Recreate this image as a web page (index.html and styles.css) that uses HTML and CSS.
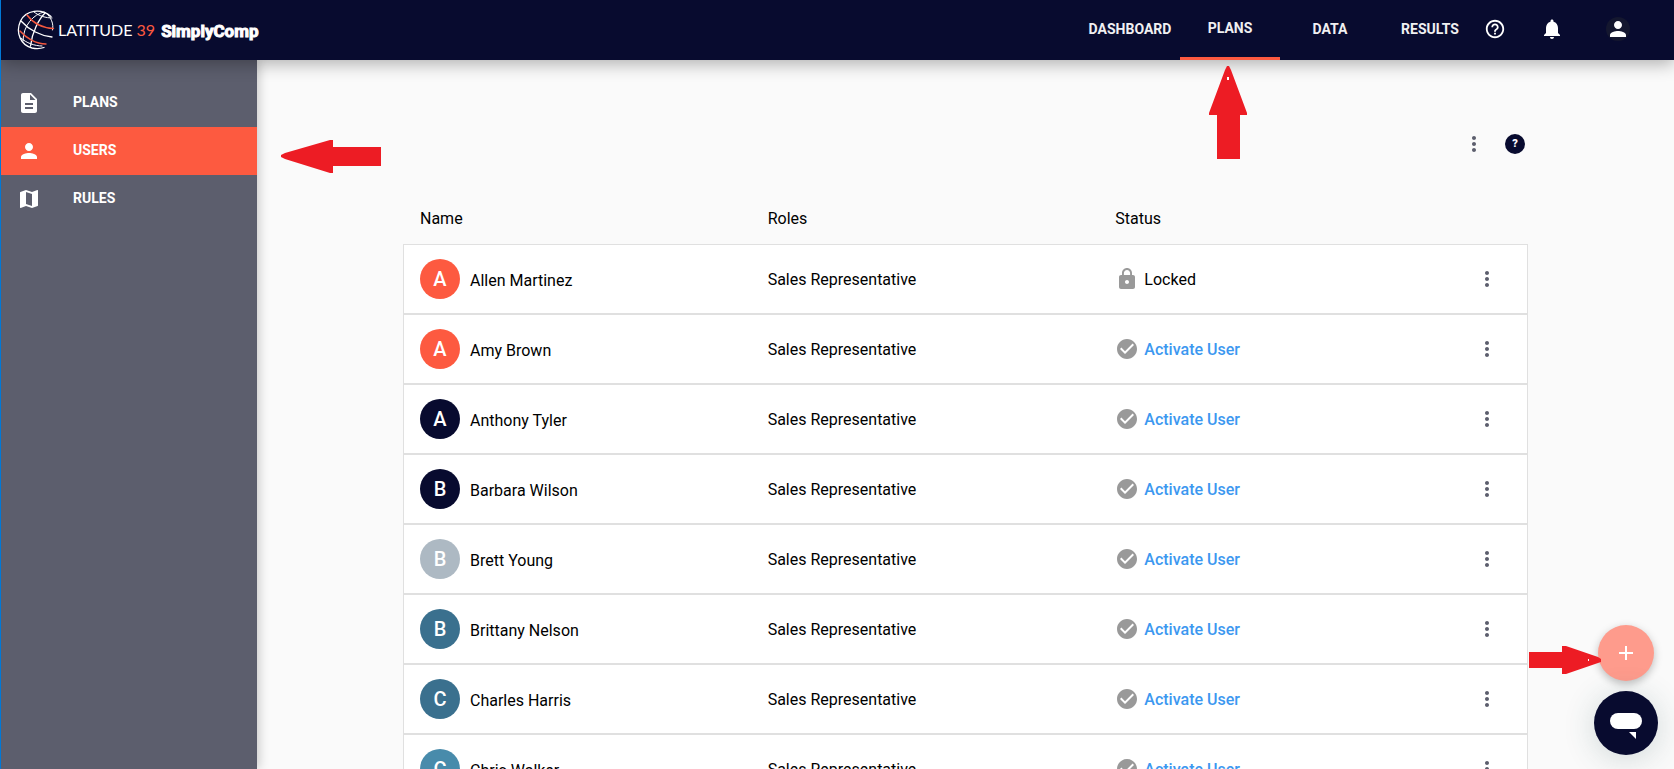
FILE: index.html
```html
<!DOCTYPE html>
<html lang="en">
<head>
    <meta charset="UTF-8">
    <meta name="viewport" content="width=device-width, initial-scale=1.0">
    <title>Latitude 39 SimplyComp - Users</title>
    <link rel="stylesheet" href="styles.css">
</head>
<body>
    <!-- Shared icons -->
    <svg class="sprite" aria-hidden="true">
        <symbol id="icon-more" viewBox="0 0 24 24"><path d="M12 8c1.1 0 2-.9 2-2s-.9-2-2-2-2 .9-2 2 .9 2 2 2zm0 2c-1.1 0-2 .9-2 2s.9 2 2 2 2-.9 2-2-.9-2-2-2zm0 6c-1.1 0-2 .9-2 2s.9 2 2 2 2-.9 2-2-.9-2-2-2z"/></symbol>
        <symbol id="icon-check" viewBox="0 0 24 24"><path d="M12 2C6.480 2 2 6.480 2 12s4.480 10 10 10 10-4.480 10-10S17.520 2 12 2zm-2 15l-5-5 1.410-1.410L10 14.170l7.590-7.590L19 8l-9 9z"/></symbol>
        <symbol id="icon-lock" viewBox="0 0 24 24"><path d="M18 8h-1V6c0-2.760-2.240-5-5-5S7 3.240 7 6v2H6c-1.100 0-2 .9-2 2v10c0 1.100.9 2 2 2h12c1.100 0 2-.9 2-2V10c0-1.100-.9-2-2-2zm-6 9c-1.100 0-2-.9-2-2s.9-2 2-2 2 .9 2 2-.9 2-2 2zm3.100-9H8.900V6c0-1.710 1.390-3.100 3.100-3.100s3.100 1.390 3.100 3.100v2z"/></symbol>
        <symbol id="icon-person" viewBox="0 0 24 24"><path d="M12 12c2.210 0 4-1.790 4-4s-1.790-4-4-4-4 1.790-4 4 1.790 4 4 4zm0 2c-2.670 0-8 1.340-8 4v2h16v-2c0-2.660-5.330-4-8-4z"/></symbol>
    </svg>

    <header class="topbar">
        <a class="brand" href="#">
            <svg class="globe" viewBox="0 0 40 40" aria-hidden="true">
                <g fill="none" stroke="#fff" stroke-linecap="round">
                    <path stroke-width="1.3" d="M34 6.500C24 -2 9 0 3.500 11C-2 23 4 35 15 38C20 39 24 38.500 27 37.500"/>
                    <path d="M27 2C17 4 6 15 6 31"/>
                    <path stroke-width="1.300" d="M28 3C22 9 15 22 13.500 36"/>
                    <path d="M29 3C34 7 37 14 35.500 20"/>
                    <path d="M17 2C22 6 29 8 35 8"/>
                    <path stroke-width="1.300" d="M4 11C12 20 24 26 35 27"/>
                    <path d="M4 28C9 33 18 36 25 36"/>
                </g>
                <g fill="none" stroke="#f4583f" stroke-width="1.400" stroke-linecap="round">
                    <path d="M10 5C16 13 26 18 36.500 18.500"/>
                    <path d="M3 21C9 28 19 34 29 34"/>
                </g>
            </svg>
            <span class="brand-name">LATITUDE <span class="accent">39</span></span>
            <span class="brand-product">SimplyComp</span>
        </a>
        <nav class="tabs">
            <a href="#">DASHBOARD</a>
            <a href="#" class="active">PLANS</a>
            <a href="#">DATA</a>
            <a href="#">RESULTS</a>
        </nav>
        <div class="tools">
            <button type="button" class="support" aria-label="Help">
                <svg viewBox="0 0 24 24"><path d="M11 18h2v-2h-2v2zm1-16C6.480 2 2 6.480 2 12s4.480 10 10 10 10-4.480 10-10S17.520 2 12 2zm0 18c-4.410 0-8-3.590-8-8s3.590-8 8-8 8 3.590 8 8-3.590 8-8 8zm0-14c-2.210 0-4 1.790-4 4h2c0-1.100.9-2 2-2s2 .9 2 2c0 2-3 1.750-3 5h2c0-2.250 3-2.500 3-5 0-2.210-1.790-4-4-4z"/></svg>
            </button>
            <button type="button" aria-label="Notifications">
                <svg viewBox="0 0 24 24"><path d="M12 22c1.100 0 2-.9 2-2h-4c0 1.100.89 2 2 2zm6-6v-5c0-3.070-1.640-5.640-4.500-6.320V4c0-.83-.67-1.500-1.500-1.500s-1.500.67-1.500 1.500v.68C7.630 5.360 6 7.920 6 11v5l-2 2v1h16v-1l-2-2z"/></svg>
            </button>
            <button type="button" class="account" aria-label="Account">
                <svg><use href="#icon-person"/></svg>
            </button>
        </div>
    </header>

    <div class="layout">
        <aside class="sidebar">
            <a href="#">
                <svg viewBox="0 0 24 24"><path d="M14 2H6c-1.100 0-2 .9-2 2v16c0 1.100.89 2 2 2h12c1.100 0 2-.9 2-2V8l-6-6zm2 16H8v-2h8v2zm0-4H8v-2h8v2zm-3-5V3.500L18.500 9H13z"/></svg>
                <span>PLANS</span>
            </a>
            <a href="#" class="active">
                <svg><use href="#icon-person"/></svg>
                <span>USERS</span>
            </a>
            <a href="#">
                <svg viewBox="0 0 24 24"><path d="M20.500 3l-.16.03L15 5.100 9 3 3.360 4.900c-.21.07-.36.25-.36.480V20.500c0 .28.22.5.5.5l.16-.03L9 18.900l6 2.100 5.640-1.900c.21-.07.36-.25.36-.48V3.500c0-.28-.22-.5-.5-.5zM15 19l-6-2.110V5l6 2.110V19z"/></svg>
                <span>RULES</span>
            </a>
        </aside>

        <main class="content">
            <div class="actions">
                <button type="button" class="icon-button" aria-label="More options"><svg><use href="#icon-more"/></svg></button>
                <button type="button" class="help" aria-label="Page help">?</button>
            </div>

            <table class="users">
                <thead>
                    <tr><th>Name</th><th>Roles</th><th>Status</th></tr>
                </thead>
                <tbody id="user-rows"></tbody>
            </table>
        </main>
    </div>

    <!-- Floating buttons -->
    <div class="floating">
        <button type="button" class="fab" aria-label="Add user">
            <svg viewBox="0 0 24 24"><path d="M19 13h-6v6h-2v-6H5v-2h6V5h2v6h6v2z"/></svg>
        </button>
        <button type="button" class="chat" aria-label="Open chat">
            <svg viewBox="0 0 32 26"><rect width="32" height="16" rx="8"/><path d="M19 19h7v7z"/></svg>
        </button>
    </div>

    <!-- Guide arrows -->
    <svg class="arrow arrow-tab" viewBox="0 0 38 93" aria-hidden="true"><path d="M18 0h2l2 4 16 43v2h-7v44H8V49H0v-2L16 4z"/><path class="spot" d="M18 11h2v3h-2z"/></svg>
    <svg class="arrow arrow-side" viewBox="0 0 100 33" aria-hidden="true"><path d="M0 15l4-2L49 0h3v7h48v19H52v7h-3L4 19l-4-2z"/></svg>
    <svg class="arrow arrow-add" viewBox="0 0 72 28" aria-hidden="true"><path d="M0 6h33V0h4l32 11 3 2v3l-3 1-32 11h-4v-6H0z"/><path class="spot" d="M59 13h1v2h-1z"/></svg>

    <script>
        const users = [
            { name: 'Allen Martinez', color: 'orange', locked: true },
            { name: 'Amy Brown', color: 'orange' },
            { name: 'Anthony Tyler', color: 'navy' },
            { name: 'Barbara Wilson', color: 'navy' },
            { name: 'Brett Young', color: 'gray' },
            { name: 'Brittany Nelson', color: 'teal' },
            { name: 'Charles Harris', color: 'teal' },
            { name: 'Chris Walker', color: 'blue' }
        ];

        function renderRow(user) {
            const status = user.locked
                ? '<svg><use href="#icon-lock"/></svg><span class="label">Locked</span>'
                : '<svg><use href="#icon-check"/></svg><a class="label" href="#">Activate User</a>';

            return `
                <tr>
                    <td><span class="avatar ${user.color}">${user.name[0]}</span><span class="user-name">${user.name}</span></td>
                    <td class="label">Sales Representative</td>
                    <td class="status">${status}</td>
                    <td><button type="button" class="icon-button" aria-label="Options for ${user.name}"><svg><use href="#icon-more"/></svg></button></td>
                </tr>
            `;
        }

        document.getElementById('user-rows').innerHTML = users.map(renderRow).join('');
    </script>
</body>
</html>
```
FILE: styles.css
```css
:root {
    --navy: #080b2f;
    --orange: #fd5a40;
    --slate: #5c5e6d;
    --line: #e0e0e0;
    --link: #3c98f0;
}

* {
    margin: 0;
    padding: 0;
    box-sizing: border-box;
}

body {
    display: flex;
    flex-direction: column;
    height: 100vh;
    overflow: hidden;
    border-left: 1px solid #0078d7;
    background-color: #fafafa;
    color: #000;
    font-family: Roboto, "Liberation Sans", sans-serif;
    font-size: 16px;
    line-height: 24px;
}

a {
    color: inherit;
    text-decoration: none;
}

button {
    border: none;
    background: none;
    color: inherit;
    font: inherit;
    cursor: pointer;
}

svg {
    display: block;
    width: 24px;
    height: 24px;
    fill: currentColor;
}

.sprite {
    position: absolute;
    width: 0;
    height: 0;
}

/* Top bar */
.topbar {
    position: relative;
    z-index: 2;
    display: flex;
    flex: none;
    height: 60px;
    padding: 0 44px 0 16px;
    background-color: var(--navy);
    color: #fff;
    box-shadow: 0 4px 16px rgba(0, 0, 0, 0.3);
}

.brand {
    display: flex;
    align-items: center;
    margin-right: auto;
}

.globe {
    width: 40px;
    height: 40px;
}

.brand-name {
    margin: 0 6px 0 1px;
    font-family: Lato, sans-serif;
    font-size: 16px;
}

.accent {
    color: var(--orange);
}

.brand-product {
    padding-top: 2px;
    font-size: 17px;
    font-weight: 700;
    -webkit-text-stroke: 1px #fff;
}

.tabs {
    display: flex;
}

.tabs a {
    width: 100px;
    padding-top: 1px;
    border-bottom: 3px solid transparent;
    color: #f0f0f2;
    font-size: 14px;
    font-weight: 700;
    line-height: 56px;
    text-align: center;
}

.tabs .active {
    padding: 0;
    border-color: var(--orange);
}

.tools {
    display: flex;
    align-items: center;
    gap: 34px;
    margin-left: 4px;
    padding-bottom: 3px;
}

.support svg {
    width: 22px;
    height: 22px;
}

.account {
    margin-left: 8px;
    border-radius: 50%;
    background-color: #14172f;
}

/* Sidebar */
.layout {
    display: flex;
    flex: 1;
    min-height: 0;
}

.sidebar {
    z-index: 1;
    flex: none;
    width: 256px;
    padding-top: 19px;
    background-color: var(--slate);
    color: #fff;
    box-shadow: 2px 0 10px rgba(0, 0, 0, 0.2);
}

.sidebar a {
    display: flex;
    align-items: center;
    gap: 32px;
    height: 48px;
    padding: 0 16px;
    font-size: 14px;
    font-weight: 700;
}

.sidebar span {
    padding-bottom: 2px;
}

.sidebar .active {
    background-color: var(--orange);
}

/* Users table */
.content {
    flex: 1;
    padding: 60px 146px 0;
    overflow-y: auto;
    scrollbar-width: none;
}

.actions {
    display: flex;
    align-items: center;
    justify-content: flex-end;
    gap: 7px;
    padding-right: 3px;
}

.icon-button {
    display: grid;
    place-items: center;
    width: 48px;
    height: 48px;
    color: var(--slate);
}

.help {
    width: 20px;
    height: 20px;
    border-radius: 50%;
    background-color: var(--navy);
    color: #fff;
    font-size: 11px;
    font-weight: 900;
    line-height: 20px;
}

.users {
    display: block;
    margin-top: 24px;
}

.users thead,
.users tbody {
    display: block;
}

.users tr {
    display: grid;
    grid-template-columns: 1fr 1fr 1fr 48px;
    align-items: center;
    padding: 0 16px;
    border: 1px solid transparent;
}

.users thead tr {
    height: 52px;
}

.users th {
    padding-top: 2px;
    font-weight: 400;
    text-align: left;
}

.users tbody tr {
    height: 70px;
    border-color: var(--line);
    background-color: #fff;
}

.users td {
    display: flex;
    align-items: center;
}

.avatar {
    width: 40px;
    height: 40px;
    margin-right: 10px;
    border-radius: 50%;
    color: #fff;
    font-size: 20px;
    font-weight: 500;
    line-height: 40px;
    text-align: center;
}

.label {
    padding-top: 2px;
}

.user-name {
    padding-top: 4px;
}

.orange { background-color: var(--orange); }
.navy { background-color: var(--navy); }
.gray { background-color: #adb9c3; }
.teal { background-color: #3a708e; }
.blue { background-color: #488bab; }

.status {
    gap: 5px;
}

.status svg {
    color: #999;
}

.status a {
    color: var(--link);
    font-weight: 500;
}

/* Floating buttons */
.floating {
    position: fixed;
    right: 16px;
    bottom: 14px;
    z-index: 3;
    display: flex;
    flex-direction: column;
    align-items: center;
    gap: 10px;
    color: #fff;
}

.fab,
.chat {
    display: grid;
    place-items: center;
    border-radius: 50%;
}

.fab {
    width: 56px;
    height: 56px;
    background-color: #fe9b8c;
    box-shadow: 0 3px 8px rgba(0, 0, 0, 0.25);
}

.chat {
    width: 64px;
    height: 64px;
    background-color: var(--navy);
    box-shadow: 0 4px 32px rgba(40, 80, 80, 0.2);
}

.chat svg {
    width: 32px;
    height: 26px;
    margin-top: 6px;
}

/* Guide arrows lie over the page */
.arrow {
    position: fixed;
    z-index: 4;
    color: #ed1c24;
}

.arrow .spot {
    fill: #fff;
}

.arrow-tab {
    top: 66px;
    right: 427px;
    width: 38px;
    height: 93px;
}

.arrow-side {
    top: 140px;
    left: 281px;
    width: 100px;
    height: 33px;
}

.arrow-add {
    right: 73px;
    bottom: 95px;
    width: 72px;
    height: 28px;
}
```
